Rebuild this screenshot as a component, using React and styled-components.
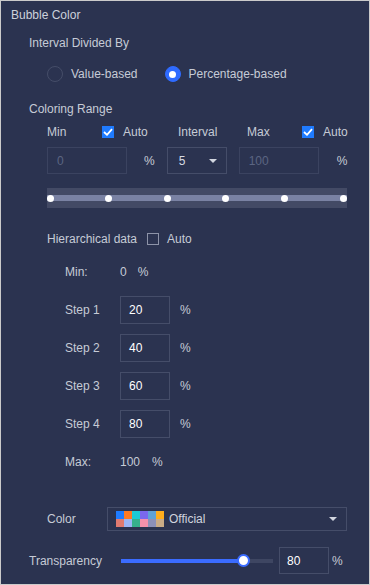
import React from "react";
import styled, { createGlobalStyle } from "styled-components";

const GlobalStyle = createGlobalStyle`
  body {
    margin: 0;
    background: #ffffff;
  }
`;

const Panel = styled.div`
  width: 370px;
  height: 585px;
  box-sizing: border-box;
  border: 1px solid #cbcbcb;
  background: #2b3350;
  color: #c6cbd6;
  font: 12px "Liberation Sans", Arial, sans-serif;
  display: flex;
  flex-direction: column;
`;

const Row = styled.div`
  display: flex;
  align-items: center;
  flex-shrink: 0;
  height: ${(p) => p.h}px;
  margin-top: ${(p) => p.mt || 0}px;
  padding-left: ${(p) => p.indent}px;
`;

const Title = styled(Row)`
  color: #cdd1db;
`;

const RadioOption = styled.label`
  display: flex;
  align-items: center;
  gap: 8px;
  margin-right: 27px;
`;

const Radio = styled.span`
  width: 16px;
  height: 16px;
  box-sizing: border-box;
  border-radius: 50%;
  border: 1px solid ${(p) => (p.checked ? "#2f6bff" : "#454d68")};
  background: ${(p) => (p.checked ? "#2f6bff" : "transparent")};
  display: flex;
  align-items: center;
  justify-content: center;
  &::after {
    content: "";
    display: ${(p) => (p.checked ? "block" : "none")};
    width: 7px;
    height: 7px;
    border-radius: 50%;
    background: #ffffff;
  }
`;

const Check = styled.span`
  width: 12px;
  height: 12px;
  box-sizing: border-box;
  border: 1px solid ${(p) => (p.checked ? "#1f7bff" : "#8d93a8")};
  background: ${(p) => (p.checked ? "#1f7bff" : "transparent")};
  display: flex;
  align-items: center;
  justify-content: center;
  margin-left: ${(p) => p.ml || 0}px;
  margin-right: ${(p) => p.mr || 0}px;
`;

const HeaderGrid = styled.div`
  display: grid;
  grid-template-columns: 55px 21px 55px 69px 55px 21px auto;
  align-items: center;
  height: 22px;
  padding-left: 46px;
`;

const Box = styled.div`
  width: ${(p) => p.w}px;
  height: ${(p) => p.h || 27}px;
  box-sizing: border-box;
  border: 1px solid ${(p) => (p.disabled ? "#3b4360" : "#454d69")};
  color: ${(p) => (p.disabled ? "#5b6582" : "#ffffff")};
  display: flex;
  align-items: center;
  padding-left: ${(p) => p.pad || 8}px;
  margin-left: ${(p) => p.ml || 0}px;
  flex-shrink: 0;
`;

const Unit = styled.span`
  margin-left: ${(p) => p.ml}px;
`;

const SelectBox = styled(Box)`
  justify-content: space-between;
  padding-right: 9px;
  color: #d6dae3;
`;

const Caret = styled.span`
  width: 0;
  height: 0;
  border-left: 4px solid transparent;
  border-right: 4px solid transparent;
  border-top: 4px solid #d2d6e0;
`;

const RangeTrack = styled.div`
  position: relative;
  margin-left: 46px;
  margin-top: 14px;
  width: 300px;
  height: 20px;
  background: #434a65;
  display: flex;
  align-items: center;
  flex-shrink: 0;
`;

const RangeBand = styled.div`
  width: 100%;
  height: 6px;
  background: #7a82a3;
`;

const Dot = styled.span`
  position: absolute;
  top: 50%;
  width: 7px;
  height: 7px;
  margin: -3.5px 0 0 -3.5px;
  border-radius: 50%;
  background: #ffffff;
`;

const FieldLabel = styled.span`
  width: ${(p) => p.w}px;
`;

const Swatches = styled.div`
  display: grid;
  grid-template-columns: repeat(6, 8px);
  grid-auto-rows: 8px;
  margin-right: 5px;
`;

const SwatchCell = styled.span`
  background: ${(p) => p.c};
`;

const SwatchGroup = styled.div`
  display: flex;
  align-items: center;
  color: #d0d4de;
`;

const SliderTrack = styled.div`
  position: relative;
  width: 152px;
  height: 4px;
  background: #3e4662;
  flex-shrink: 0;
`;

const SliderFill = styled.div`
  height: 100%;
  background: #3b6cff;
`;

const Thumb = styled.span`
  position: absolute;
  top: 50%;
  width: 13px;
  height: 13px;
  box-sizing: border-box;
  margin: -6.5px 0 0 -6.5px;
  border-radius: 50%;
  background: #ffffff;
  border: 2px solid #3b6cff;
`;

const CheckMark = () => (
  <svg width="10" height="8" viewBox="0 0 10 8">
    <path d="M1 4 L4 6.8 L9 1.2" fill="none" stroke="#fff" strokeWidth="1.8" />
  </svg>
);

const swatchColors = [
  "#1f7bff", "#ff7a22", "#1ccbd4", "#7a68ee", "#5fa2d6", "#ffad1c",
  "#e07a70", "#9bb5f6", "#36b08c", "#f591ab", "#8c90b8", "#c9ab86",
];

const steps = [20, 40, 60, 80];

export default function App() {
  const transparency = 80;
  const pxPerUnit = 1.525;
  return (
    <>
      <GlobalStyle />
      <Panel>
        <Title h={28} indent={10}>Bubble Color</Title>
        <Row h={28} indent={28}>Interval Divided By</Row>
        <Row h={34} indent={46}>
          <RadioOption>
            <Radio />
            Value-based
          </RadioOption>
          <RadioOption>
            <Radio checked />
            Percentage-based
          </RadioOption>
        </Row>
        <Row h={24} mt={6} indent={28}>Coloring Range</Row>
        <HeaderGrid>
          <span>Min</span>
          <Check checked><CheckMark /></Check>
          <span>Auto</span>
          <span>Interval</span>
          <span>Max</span>
          <Check checked><CheckMark /></Check>
          <span>Auto</span>
        </HeaderGrid>
        <Row h={27} mt={4} indent={46}>
          <Box w={80} disabled pad={9}>0</Box>
          <Unit ml={17}>%</Unit>
          <SelectBox w={60} ml={12} pad={11}>
            5
            <Caret />
          </SelectBox>
          <Box w={80} ml={12} disabled pad={9}>100</Box>
          <Unit ml={18}>%</Unit>
        </Row>
        <RangeTrack>
          <RangeBand />
          {[0, 1, 2, 3, 4, 5].map((i) => (
            <Dot key={i} style={{ left: 3 + i * 58.6 }} />
          ))}
        </RangeTrack>
        <Row h={22} mt={20} indent={46}>
          Hierarchical data
          <Check ml={10} mr={8} />
          Auto
        </Row>
        <Row h={22} mt={11} indent={64}>
          <FieldLabel w={55}>Min:</FieldLabel>
          0<Unit ml={11}>%</Unit>
        </Row>
        {steps.map((v, i) => (
          <Row key={v} h={28} mt={i === 0 ? 13 : 10} indent={64}>
            <FieldLabel w={55}>Step {i + 1}</FieldLabel>
            <Box w={50} h={28}>{v}</Box>
            <Unit ml={10}>%</Unit>
          </Row>
        ))}
        <Row h={22} mt={13} indent={64}>
          <FieldLabel w={55}>Max:</FieldLabel>
          100<Unit ml={12}>%</Unit>
        </Row>
        <Row h={24} mt={34} indent={46}>
          <FieldLabel w={60}>Color</FieldLabel>
          <SelectBox w={240} h={24} pad={8}>
            <SwatchGroup>
              <Swatches>
                {swatchColors.map((c) => (
                  <SwatchCell key={c} c={c} />
                ))}
              </Swatches>
              Official
            </SwatchGroup>
            <Caret />
          </SelectBox>
        </Row>
        <Row h={27} mt={16} indent={28}>
          <FieldLabel w={92}>Transparency</FieldLabel>
          <SliderTrack>
            <SliderFill style={{ width: `${transparency * pxPerUnit}px` }} />
            <Thumb style={{ left: transparency * pxPerUnit }} />
          </SliderTrack>
          <Box w={50} h={27} ml={6} pad={7}>{transparency}</Box>
          <Unit ml={3}>%</Unit>
        </Row>
      </Panel>
    </>
  );
}
